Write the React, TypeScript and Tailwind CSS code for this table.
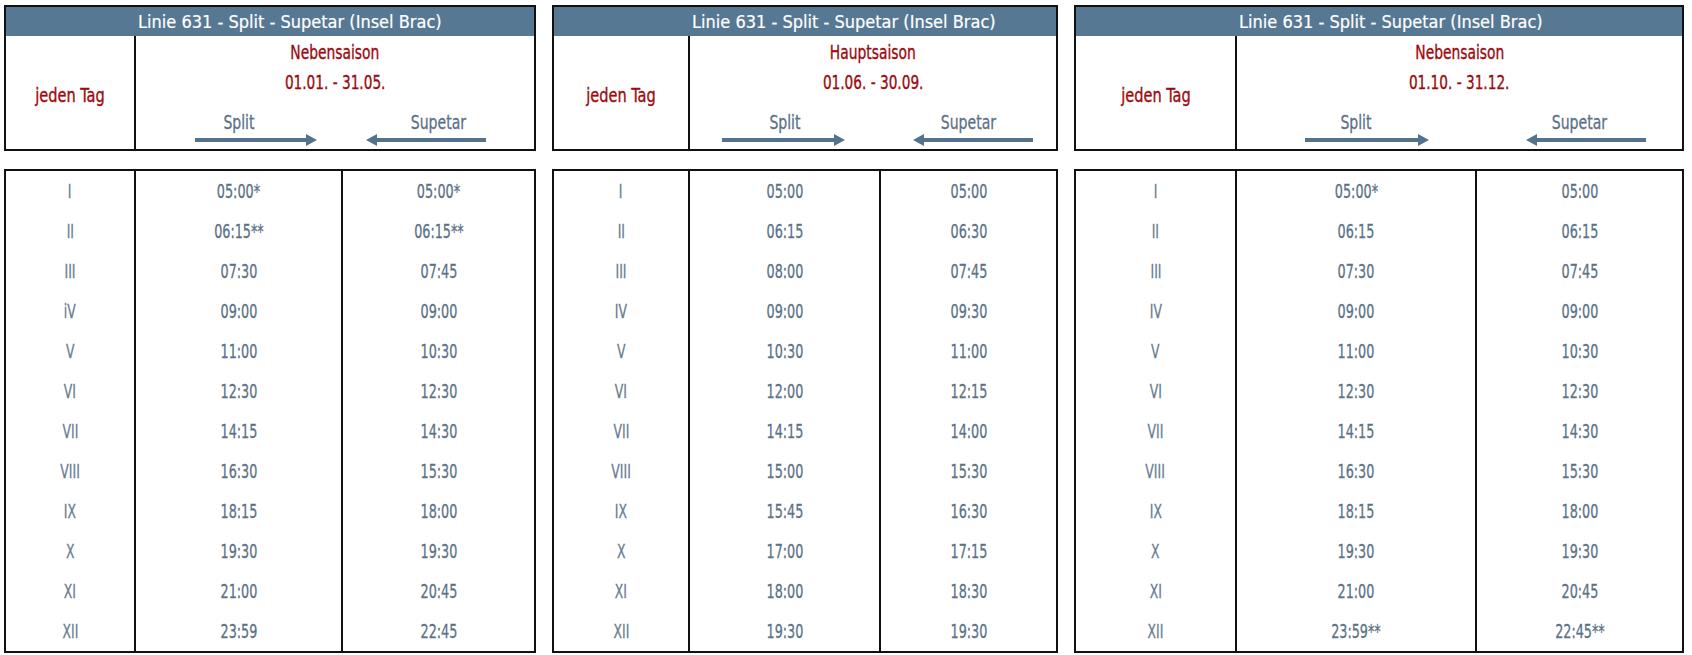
import React from "react";

type Row = [string, string, string];

type Panel = {
  season: string;
  dates: string;
  outer: string;
  left: string;
  mid: string;
  pad: string;
  midArrow: string;
  rightArrow: string;
  midW: number;
  rightW: number;
  rows: Row[];
};

const panels: Panel[] = [
  {
    season: "Nebensaison",
    dates: "01.01. - 31.05.",
    outer: "w-[532px]",
    left: "w-[130px]",
    mid: "w-[207px]",
    pad: "pl-[132px]",
    midArrow: "ml-[59px]",
    rightArrow: "ml-[23px]",
    midW: 122,
    rightW: 120,
    rows: [
      ["I", "05:00*", "05:00*"],
      ["II", "06:15**", "06:15**"],
      ["III", "07:30", "07:45"],
      ["iV", "09:00", "09:00"],
      ["V", "11:00", "10:30"],
      ["VI", "12:30", "12:30"],
      ["VII", "14:15", "14:30"],
      ["VIII", "16:30", "15:30"],
      ["IX", "18:15", "18:00"],
      ["X", "19:30", "19:30"],
      ["XI", "21:00", "20:45"],
      ["XII", "23:59", "22:45"],
    ],
  },
  {
    season: "Hauptsaison",
    dates: "01.06. - 30.09.",
    outer: "w-[506px]",
    left: "w-[136px]",
    mid: "w-[191px]",
    pad: "pl-[138px]",
    midArrow: "ml-[32px]",
    rightArrow: "ml-[32px]",
    midW: 123,
    rightW: 120,
    rows: [
      ["I", "05:00", "05:00"],
      ["II", "06:15", "06:30"],
      ["III", "08:00", "07:45"],
      ["IV", "09:00", "09:30"],
      ["V", "10:30", "11:00"],
      ["VI", "12:00", "12:15"],
      ["VII", "14:15", "14:00"],
      ["VIII", "15:00", "15:30"],
      ["IX", "15:45", "16:30"],
      ["X", "17:00", "17:15"],
      ["XI", "18:00", "18:30"],
      ["XII", "19:30", "19:30"],
    ],
  },
  {
    season: "Nebensaison",
    dates: "01.10. - 31.12.",
    outer: "w-[610px]",
    left: "w-[161px]",
    mid: "w-[240px]",
    pad: "pl-[163px]",
    midArrow: "ml-[68px]",
    rightArrow: "ml-[49px]",
    midW: 124,
    rightW: 120,
    rows: [
      ["I", "05:00*", "05:00"],
      ["II", "06:15", "06:15"],
      ["III", "07:30", "07:45"],
      ["IV", "09:00", "09:00"],
      ["V", "11:00", "10:30"],
      ["VI", "12:30", "12:30"],
      ["VII", "14:15", "14:30"],
      ["VIII", "16:30", "15:30"],
      ["IX", "18:15", "18:00"],
      ["X", "19:30", "19:30"],
      ["XI", "21:00", "20:45"],
      ["XII", "23:59**", "22:45**"],
    ],
  },
];

function Arrow({ w, dir }: { w: number; dir: "right" | "left" }) {
  const head = 11;
  return (
    <svg width={w} height={12} viewBox={`0 0 ${w} 12`} className="block">
      {dir === "right" ? (
        <>
          <rect x={0} y={4} width={w - head + 1} height={4} fill="#52728e" />
          <polygon points={`${w - head},0 ${w},6 ${w - head},12`} fill="#52728e" />
        </>
      ) : (
        <>
          <rect x={head - 1} y={4} width={w - head + 1} height={4} fill="#52728e" />
          <polygon points={`${head},0 0,6 ${head},12`} fill="#52728e" />
        </>
      )}
    </svg>
  );
}

function TimetablePanel({ p }: { p: Panel }) {
  return (
    <div className={`${p.outer} flex flex-col`}>
      <div className="border-2 border-[#111] h-[146px] flex flex-col">
        <div
          className={`h-[29px] bg-[#567893] text-white text-[18px] leading-[29px] whitespace-nowrap [-webkit-text-stroke:0.2px_white] ${p.pad}`}
        >
          Linie 631 - Split - Supetar (Insel Brac)
        </div>
        <div className="flex flex-1">
          <div
            className={`${p.left} border-r-2 border-[#111] flex items-center justify-center pt-[5px] text-[#9c0a0e] text-[20px] [-webkit-text-stroke:0.35px_#9c0a0e]`}
          >
            <span className="inline-block scale-x-[0.81] whitespace-nowrap">jeden Tag</span>
          </div>
          <div className="flex-1 flex flex-col pt-[1px] text-[#9c0a0e] [-webkit-text-stroke:0.35px_#9c0a0e]">
            <div className="text-center text-[20px] leading-[30px]">
              <span className="inline-block scale-x-[0.77] whitespace-nowrap">{p.season}</span>
            </div>
            <div className="text-center text-[20px] leading-[30px]">
              <span className="inline-block scale-x-[0.76] whitespace-nowrap">{p.dates}</span>
            </div>
            <div className="flex mt-[13px] text-[#5b7187] [-webkit-text-stroke:0.3px_#5b7187]">
              <div className={`${p.mid} flex flex-col`}>
                <div className="text-center text-[20px] leading-[24px] pr-[2px]">
                  <span className="inline-block scale-x-[0.78]">Split</span>
                </div>
                <div className={p.midArrow}>
                  <Arrow w={p.midW} dir="right" />
                </div>
              </div>
              <div className="flex-1 flex flex-col">
                <div className="text-center text-[20px] leading-[24px]">
                  <span className="inline-block scale-x-[0.78]">Supetar</span>
                </div>
                <div className={p.rightArrow}>
                  <Arrow w={p.rightW} dir="left" />
                </div>
              </div>
            </div>
          </div>
        </div>
      </div>
      <div className="mt-[18px] border-2 border-[#111] flex text-[#5b7187] [-webkit-text-stroke:0.3px_#5b7187]">
        <div className={`${p.left} border-r-2 border-[#111] flex flex-col text-[#687c91] [-webkit-text-stroke:0.3px_#687c91]`}>
          {p.rows.map((r, i) => (
            <div key={i} className="h-10 flex items-center justify-center text-[20px]">
              <span className="inline-block scale-x-[0.69]">{r[0]}</span>
            </div>
          ))}
        </div>
        <div className={`${p.mid} border-r-2 border-[#111] flex flex-col`}>
          {p.rows.map((r, i) => (
            <div key={i} className="h-10 flex items-center justify-center text-[20px]">
              <span className="inline-block scale-x-[0.71]">{r[1]}</span>
            </div>
          ))}
        </div>
        <div className="flex-1 flex flex-col">
          {p.rows.map((r, i) => (
            <div key={i} className="h-10 flex items-center justify-center text-[20px]">
              <span className="inline-block scale-x-[0.71]">{r[2]}</span>
            </div>
          ))}
        </div>
      </div>
    </div>
  );
}

export default function App() {
  return (
    <div className="w-[1692px] h-[655px] bg-white overflow-hidden font-['DejaVu_Sans_Condensed','DejaVu_Sans',sans-serif] font-stretch-condensed">
      <div className="flex gap-4 pl-[4px] pt-[5px]">
        {panels.map((p, i) => (
          <TimetablePanel key={i} p={p} />
        ))}
      </div>
    </div>
  );
}
